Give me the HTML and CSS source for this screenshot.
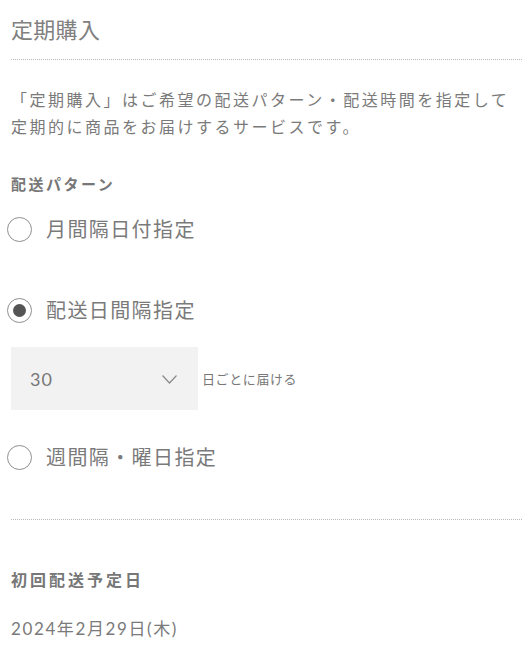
FILE: index.html
```html
<!DOCTYPE html>
<html lang="ja">
<head>
<meta charset="utf-8">
<link rel="stylesheet" href="styles.css">
</head>
<body>
<div class="page">
  <h1 class="title">定期購入</h1>
  <p class="lead">「定期購入」はご希望の配送パターン・配送時間を指定して<br>定期的に商品をお届けするサービスです。</p>
  <h2 class="heading heading-pattern">配送パターン</h2>
  <div class="option option-first">
    <span class="radio"></span>
    <span class="option-label">月間隔日付指定</span>
  </div>
  <div class="option option-second">
    <span class="radio radio-checked"></span>
    <span class="option-label">配送日間隔指定</span>
  </div>
  <div class="interval">
    <div class="select">
      <span class="select-value">30</span>
      <svg class="chevron" width="15" height="9" viewBox="0 0 15 9"><polyline points="0.5,0.5 7.5,8 14.5,0.5" fill="none" stroke="#8a8a8a" stroke-width="1.2"/></svg>
    </div>
    <span class="interval-text">日ごとに届ける</span>
  </div>
  <div class="option option-third">
    <span class="radio"></span>
    <span class="option-label">週間隔・曜日指定</span>
  </div>
  <div class="divider"></div>
  <h2 class="heading heading-first">初回配送予定日</h2>
  <p class="date">2024年2月29日(木)</p>
</div>
</body>
</html>
```
FILE: styles.css
```css
* { box-sizing: border-box; }
html, body { margin: 0; padding: 0; background: #fff; }
body {
  font-family: "Noto Sans CJK JP", "Noto Sans", sans-serif;
  color: #7a7a7a;
}
.page {
  padding: 0 6px 0 11px;
}
.title {
  margin: 0;
  padding-top: 6px;
  padding-bottom: 9px;
  font-size: 22px;
  font-weight: 400;
  line-height: 44px;
  letter-spacing: 0.3px;
  color: #808080;
  border-bottom: 1px dotted #b8b8b8;
}
.lead {
  margin: 26px 0 0;
  font-size: 16px;
  line-height: 27px;
  letter-spacing: 2.5px;
  white-space: nowrap;
}
.heading {
  margin: 0;
  font-size: 15px;
  font-weight: 700;
  line-height: 24px;
  letter-spacing: 2.5px;
  color: #777;
}
.heading-pattern { margin-top: 32px; }
.option {
  display: flex;
  align-items: center;
  height: 40px;
  margin-left: -4px;
  gap: 14px;
}
.option-first { margin-top: 13px; }
.option-second { margin-top: 41px; }
.option-third { margin-top: 27px; }
.radio {
  width: 25px;
  height: 25px;
  border: 1.3px solid #8f8f8f;
  border-radius: 50%;
  display: flex;
  align-items: center;
  justify-content: center;
  flex: none;
}
.radio-checked::after {
  content: "";
  width: 13px;
  height: 13px;
  border-radius: 50%;
  background: #555;
}
.option-label {
  font-size: 20px;
  letter-spacing: 1.4px;
  line-height: 30px;
  color: #7a7a7a;
}
.interval {
  display: flex;
  align-items: center;
  gap: 4px;
  margin-top: 17px;
}
.select {
  width: 187px;
  height: 63px;
  background: #f2f2f2;
  display: flex;
  align-items: center;
  justify-content: space-between;
  padding: 0 21px 0 19px;
}
.select-value {
  font-family: "Lato", "Noto Sans", sans-serif;
  font-size: 18px;
  letter-spacing: 1px;
  color: #777;
}
.chevron { display: block; margin-top: 1px; }
.interval-text {
  font-size: 13px;
  letter-spacing: 0.6px;
  color: #777;
}
.divider {
  margin-top: 42px;
  border-top: 1px dotted #b8b8b8;
}
.heading-first {
  margin-top: 47px;
  font-size: 16px;
  letter-spacing: 3px;
}
.date {
  margin: 26px 0 0;
  font-family: "Lato", "Noto Sans CJK JP", sans-serif;
  font-size: 17px;
  line-height: 24px;
  letter-spacing: 1.6px;
  color: #7a7a7a;
}
```
